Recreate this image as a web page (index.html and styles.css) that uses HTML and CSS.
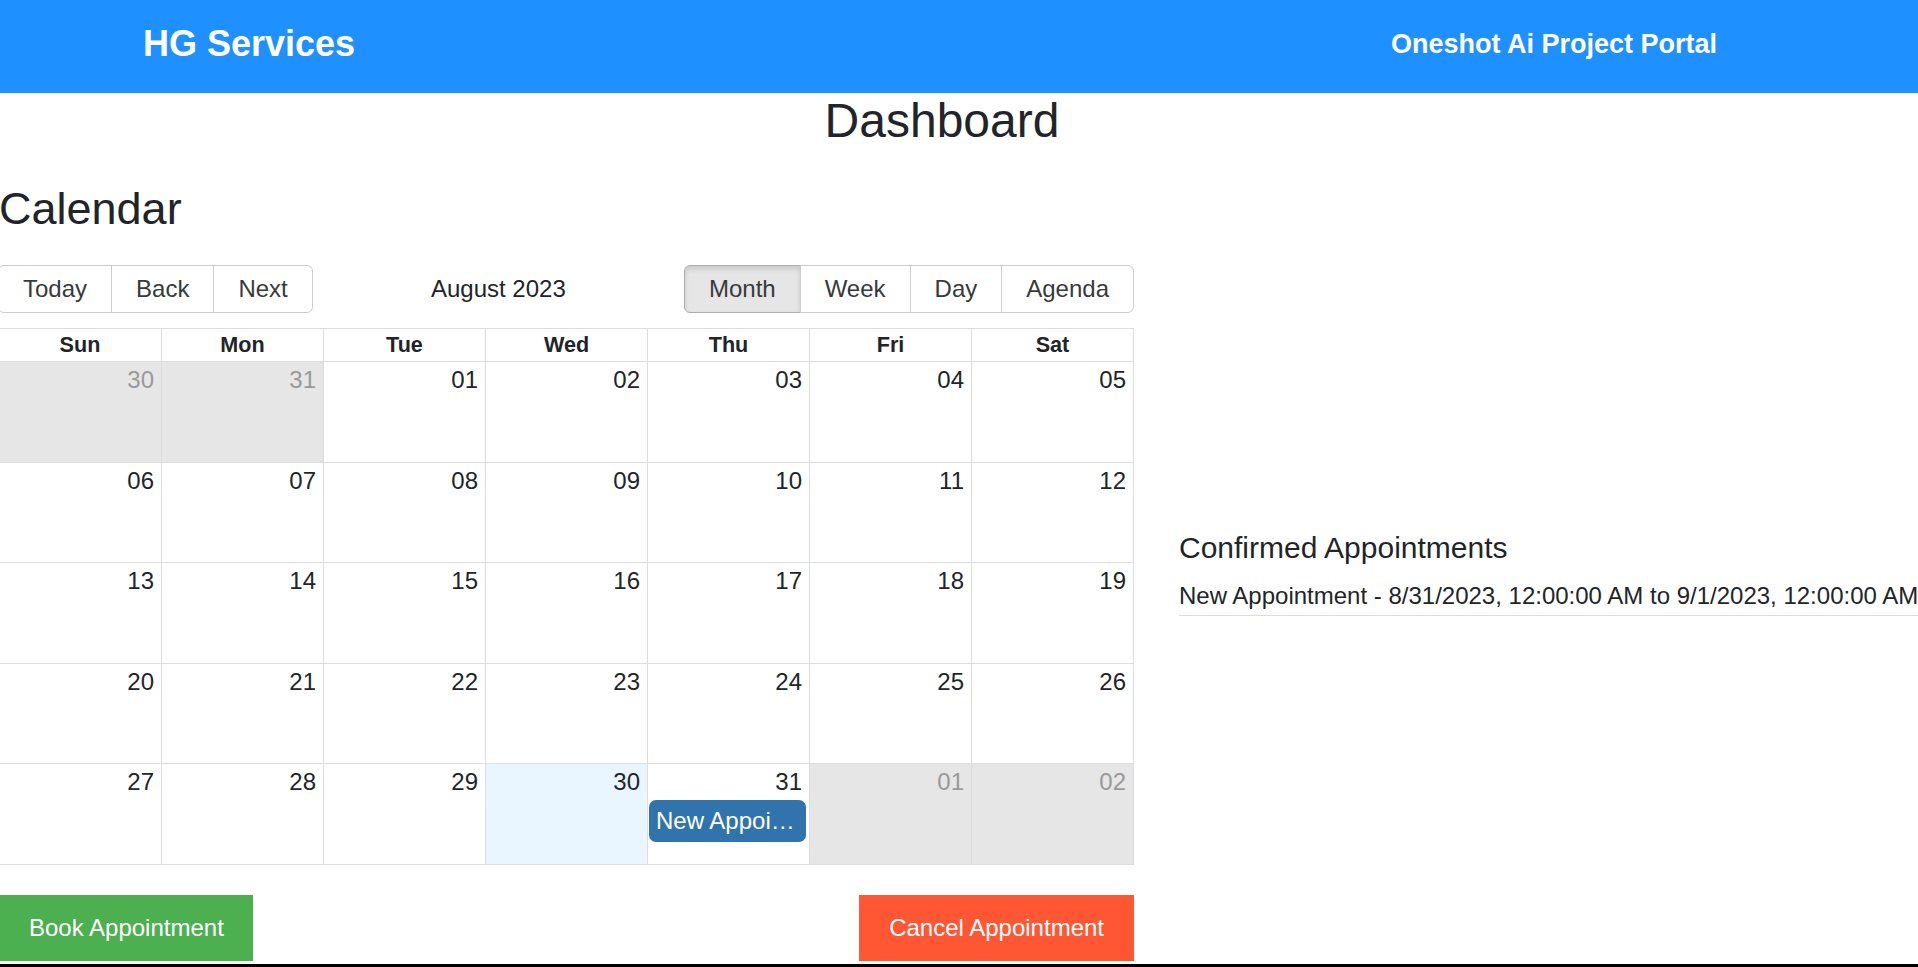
FILE: index.html
```html
<!DOCTYPE html>
<html lang="en">
<head>
<meta charset="utf-8">
<title>HG Services - Dashboard</title>
<link rel="stylesheet" href="styles.css">
</head>
<body>
<header class="topbar">
  <div class="brand">HG Services</div>
  <div class="portal">Oneshot Ai Project Portal</div>
</header>
<main class="page">
  <h1 class="page-title">Dashboard</h1>
  <div class="content">
    <section class="calendar-section">
      <h2 class="section-title">Calendar</h2>
      <div class="toolbar">
        <div class="btn-group">
          <button class="tb-btn">Today</button>
          <button class="tb-btn">Back</button>
          <button class="tb-btn">Next</button>
        </div>
        <div class="toolbar-label">August 2023</div>
        <div class="btn-group">
          <button class="tb-btn active">Month</button>
          <button class="tb-btn">Week</button>
          <button class="tb-btn">Day</button>
          <button class="tb-btn">Agenda</button>
        </div>
      </div>
      <div class="month">
        <div class="month-head">
          <div class="day-name">Sun</div>
          <div class="day-name">Mon</div>
          <div class="day-name">Tue</div>
          <div class="day-name">Wed</div>
          <div class="day-name">Thu</div>
          <div class="day-name">Fri</div>
          <div class="day-name">Sat</div>
        </div>
        <div class="week">
          <div class="day off"><div class="day-num">30</div></div>
          <div class="day off"><div class="day-num">31</div></div>
          <div class="day"><div class="day-num">01</div></div>
          <div class="day"><div class="day-num">02</div></div>
          <div class="day"><div class="day-num">03</div></div>
          <div class="day"><div class="day-num">04</div></div>
          <div class="day"><div class="day-num">05</div></div>
        </div>
        <div class="week">
          <div class="day"><div class="day-num">06</div></div>
          <div class="day"><div class="day-num">07</div></div>
          <div class="day"><div class="day-num">08</div></div>
          <div class="day"><div class="day-num">09</div></div>
          <div class="day"><div class="day-num">10</div></div>
          <div class="day"><div class="day-num">11</div></div>
          <div class="day"><div class="day-num">12</div></div>
        </div>
        <div class="week">
          <div class="day"><div class="day-num">13</div></div>
          <div class="day"><div class="day-num">14</div></div>
          <div class="day"><div class="day-num">15</div></div>
          <div class="day"><div class="day-num">16</div></div>
          <div class="day"><div class="day-num">17</div></div>
          <div class="day"><div class="day-num">18</div></div>
          <div class="day"><div class="day-num">19</div></div>
        </div>
        <div class="week">
          <div class="day"><div class="day-num">20</div></div>
          <div class="day"><div class="day-num">21</div></div>
          <div class="day"><div class="day-num">22</div></div>
          <div class="day"><div class="day-num">23</div></div>
          <div class="day"><div class="day-num">24</div></div>
          <div class="day"><div class="day-num">25</div></div>
          <div class="day"><div class="day-num">26</div></div>
        </div>
        <div class="week">
          <div class="day"><div class="day-num">27</div></div>
          <div class="day"><div class="day-num">28</div></div>
          <div class="day"><div class="day-num">29</div></div>
          <div class="day today"><div class="day-num">30</div></div>
          <div class="day"><div class="day-num">31</div><div class="event">New Appointment</div></div>
          <div class="day off"><div class="day-num">01</div></div>
          <div class="day off"><div class="day-num">02</div></div>
        </div>
      </div>
      <div class="actions">
        <button class="btn btn-book">Book Appointment</button>
        <button class="btn btn-cancel">Cancel Appointment</button>
      </div>
    </section>
    <section class="appointments">
      <h3 class="appt-title">Confirmed Appointments</h3>
      <ul class="appt-list">
        <li>New Appointment - 8/31/2023, 12:00:00 AM to 9/1/2023, 12:00:00 AM</li>
      </ul>
    </section>
  </div>
</main>
<footer class="footer"></footer>
</body>
</html>
```

FILE: styles.css
```css
* { box-sizing: border-box; }

html { overflow: hidden; }

body {
  margin: 0;
  font-family: "Liberation Sans", Arial, sans-serif;
  color: #212529;
  background: #fff;
}

.topbar {
  height: 93px;
  background: #1e90ff;
  color: #fff;
  display: flex;
  align-items: center;
  justify-content: space-between;
  padding: 0 201px 5px 143px;
}

.brand { font-size: 36px; font-weight: bold; }
.portal { font-size: 27px; font-weight: bold; }

.page-title {
  margin: 0;
  padding-right: 34px;
  text-align: center;
  font-size: 48px;
  font-weight: normal;
}

.content {
  display: flex;
  align-items: center;
  gap: 45px;
  margin-top: 35px;
}

.calendar-section {
  width: 1136px;
  margin-left: -2px;
  flex: none;
}

.section-title {
  margin: 0 0 30px 1px;
  font-size: 45px;
  font-weight: normal;
}

.toolbar {
  display: flex;
  align-items: center;
  margin-bottom: 15px;
  font-size: 24px;
}

.btn-group { display: flex; }

.tb-btn {
  font: inherit;
  color: #373a3c;
  background: #fff;
  border: 1px solid #ccc;
  padding: 9px 24px;
  margin: 0;
  line-height: normal;
}
.tb-btn + .tb-btn { margin-left: -1px; }
.tb-btn:first-child { border-radius: 6px 0 0 6px; }
.tb-btn:last-child { border-radius: 0 6px 6px 0; }
.tb-btn.active {
  background: #e6e6e6;
  border-color: #adadad;
  box-shadow: inset 0 3px 5px rgba(0, 0, 0, .125);
}

.toolbar-label {
  flex: 1;
  text-align: center;
  padding: 0 10px;
}

.month {
  height: 537px;
  border: 1px solid #ddd;
  display: flex;
  flex-direction: column;
  font-size: 24px;
}

.month-head {
  display: grid;
  grid-template-columns: repeat(7, 1fr);
  height: 33px;
  flex: none;
  border-bottom: 1px solid #ddd;
}

.day-name {
  text-align: center;
  font-weight: bold;
  font-size: 21.6px;
  line-height: 32px;
}
.day-name + .day-name { border-left: 1px solid #ddd; }

.week {
  flex: 1;
  display: grid;
  grid-template-columns: repeat(7, 1fr);
}
.week + .week { border-top: 1px solid #ddd; }

.day { padding-top: 4px; text-align: right; min-width: 0; }
.day + .day { border-left: 1px solid #ddd; }
.day-num { padding-right: 7px; }
.day.off { background: #e6e6e6; color: #999; }
.day.today { background: #eaf6ff; }

.event {
  margin: 4px 3px 0 1px;
  background: #3174ad;
  color: #fff;
  border-radius: 7px;
  padding: 7px;
  text-align: left;
  white-space: nowrap;
  overflow: hidden;
  text-overflow: ellipsis;
}

.actions {
  display: flex;
  justify-content: space-between;
  margin-top: 30px;
}

.btn {
  font: inherit;
  font-size: 24px;
  color: #fff;
  border: none;
  border-radius: 0;
  line-height: 28px;
  padding: 19px 30px;
  margin: 0;
}
.btn-book { background: #4caf50; padding: 19px 29px; margin-left: 2px; }
.btn-cancel { background: #ff5733; }

.appointments {
  flex: 1;
  min-width: 0;
  padding-top: 3px;
}

.appt-title {
  font-size: 30px;
  font-weight: normal;
  margin: 0 0 12px;
}

.appt-list {
  list-style: none;
  margin: 0;
  padding: 0;
  font-size: 24px;
}
.appt-list li {
  padding: 5px 0;
  border-bottom: 1px solid #ddd;
  white-space: nowrap;
}

.footer {
  height: 20px;
  margin-top: 3px;
  background: #000;
}
```
